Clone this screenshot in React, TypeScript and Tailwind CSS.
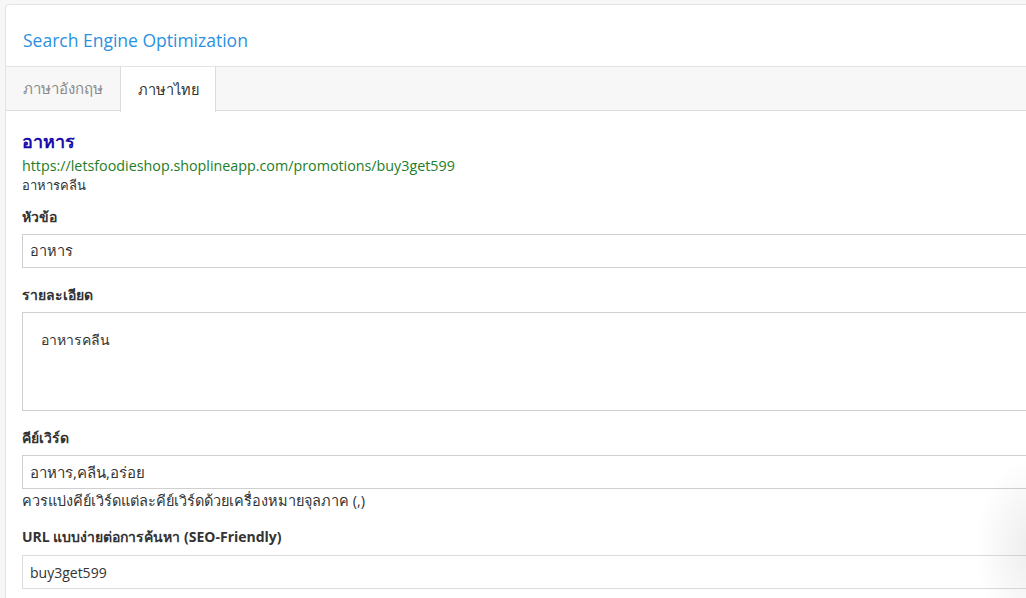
import React from "react";

export default function App() {
  return (
    <div className="w-[1026px] h-[598px] overflow-hidden bg-[#f7f7f7] relative" style={{ fontFamily: '"Open Sans", "Noto Sans", sans-serif' }}>
      <div className="absolute left-[5px] top-[4px] w-[1200px] h-[700px] bg-white border border-[#e3e3e3] rounded-[4px]">
        <div className="h-[62px] border-b border-[#e3e3e3] flex items-center pl-[17px] pt-[10px]">
          <span className="text-[17.5px] text-[#2a91df] leading-none">Search Engine Optimization</span>
        </div>
        <div className="h-[44px] bg-[#f7f7f7] border-b border-[#dcdcdc] flex">
          <div className="w-[114px] flex items-center pl-[17px] text-[15px] text-[#8a8a8a]">ภาษาอังกฤษ</div>
          <div className="w-[96px] h-[45px] bg-white border-x border-[#dcdcdc] flex items-center justify-center text-[14.5px] text-[#333]">ภาษาไทย</div>
        </div>
        <div className="pl-[16px] pt-[18px] text-[#333]">
          <div className="text-[18px] leading-[24px] text-[#1a0dab] font-semibold">อาหาร</div>
          <div className="mt-[3px] text-[14.3px] leading-[20px] text-[#1e7d28]">https://letsfoodieshop.shoplineapp.com/promotions/buy3get599</div>
          <div className="text-[13px] leading-[18px] text-[#333]">อาหารคลีน</div>

          <div className="mt-[13px] text-[14px] font-bold leading-[20px]">หัวข้อ</div>
          <div className="mt-[7px] h-[34px] border border-[#cfcfcf] flex items-center pl-[7px] text-[14.5px] text-[#333]">อาหาร</div>

          <div className="mt-[17px] text-[14px] font-bold leading-[20px]">รายละเอียด</div>
          <div className="mt-[7px] h-[99px] border border-[#cfcfcf] pl-[18px] pt-[17px] text-[14px] text-[#333] leading-[20px]">อาหารคลีน</div>

          <div className="mt-[17px] text-[14px] font-bold leading-[20px]">คีย์เวิร์ด</div>
          <div className="mt-[7px] h-[34px] border border-[#cfcfcf] flex items-center pl-[7px] text-[15px] text-[#333]">อาหาร,คลีน,อร่อย</div>
          <div className="mt-[2px] text-[14.5px] leading-[20px] text-[#333]">ควรแบ่งคีย์เวิร์ดแต่ละคีย์เวิร์ดด้วยเครื่องหมายจุลภาค (,)</div>

          <div className="mt-[16px] text-[14px] font-bold leading-[20px]">URL แบบง่ายต่อการค้นหา (SEO-Friendly)</div>
          <div className="mt-[8px] h-[34px] border border-[#dcdcdc] flex items-center pl-[7px] text-[14px] text-[#333]">buy3get599</div>
        </div>
      </div>
      <div className="absolute right-[-60px] bottom-[-40px] w-[110px] h-[180px] rounded-full bg-[radial-gradient(closest-side,rgba(0,0,0,0.07),rgba(0,0,0,0))]" />
    </div>
  );
}
